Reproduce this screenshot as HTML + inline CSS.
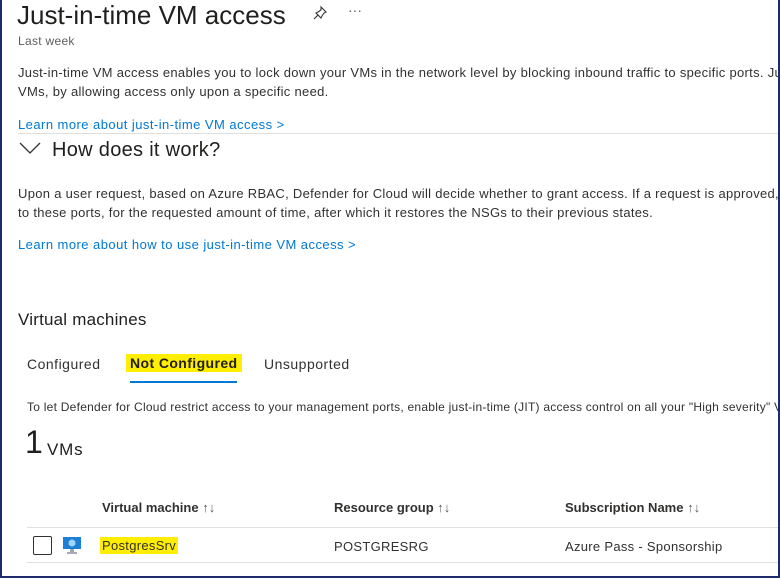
<!DOCTYPE html>
<html><head><style>
body{margin:0;width:780px;height:579px;overflow:hidden;background:#fff;font-family:"Liberation Sans",sans-serif;color:#323130;position:relative}
.c{position:absolute;left:0;top:0;width:778px;height:577px;overflow:hidden}
.f{position:absolute;left:0;top:0;width:776px;height:576px;border:2px solid #1f2a6b;border-top:none}
.a{position:absolute;white-space:nowrap}
.l{color:#0078d4;font-size:13px;letter-spacing:0.45px}
.t{font-size:13px;letter-spacing:0.3px}
.h{background:#ffee00}
.hr{position:absolute;height:1px;background:#e1dfdd}
</style></head><body>
<div class="c">
<div class="a" style="left:17px;top:0px;font-size:26px;color:#201f1e">Just-in-time VM access</div>
<div class="a" style="left:312px;top:5px"><svg width="16" height="16" viewBox="0 0 16 16" fill="none" stroke="#323130" stroke-width="1.1"><path d="M9 2l5 5-2 1-2 3-1 2-5-5 2-1 3-2z M6 10l-4 4"/></svg></div>
<div class="a" style="left:348px;top:2px;font-size:14px;color:#605e5c">···</div>
<div class="a" style="left:18px;top:34px;font-size:12px;color:#605e5c;letter-spacing:0.3px">Last week</div>
<div class="a t" style="left:18px;top:65px">Just-in-time VM access enables you to lock down your VMs in the network level by blocking inbound traffic to specific ports. Just-in-time</div>
<div class="a t" style="left:18px;top:84px">VMs, by allowing access only upon a specific need.</div>
<div class="a l" style="left:18px;top:117px">Learn more about just-in-time VM access &gt;</div>
<div class="hr" style="left:18px;top:133px;width:760px"></div>
<div class="a" style="left:18px;top:140px"><svg width="24" height="16" viewBox="0 0 24 16"><path d="M2 3l10 10 10-10" fill="none" stroke="#323130" stroke-width="1.3"/></svg></div>
<div class="a" style="left:52px;top:139px;font-size:20px;color:#201f1e;letter-spacing:0.3px">How does it work?</div>
<div class="a t" style="left:18px;top:186px">Upon a user request, based on Azure RBAC, Defender for Cloud will decide whether to grant access. If a request is approved, Defender for</div>
<div class="a t" style="left:18px;top:205px">to these ports, for the requested amount of time, after which it restores the NSGs to their previous states.</div>
<div class="a l" style="left:18px;top:237px">Learn more about how to use just-in-time VM access &gt;</div>
<div class="a" style="left:18px;top:310px;font-size:17px;color:#201f1e;letter-spacing:0.2px">Virtual machines</div>
<div class="a" style="left:27px;top:356px;font-size:14px;letter-spacing:0.5px">Configured</div>
<div class="a h" style="left:126px;top:354px;font-size:14px;font-weight:bold;padding:1px 5px 1px 4px;color:#201f1e;letter-spacing:0.4px">Not Configured</div>
<div class="a" style="left:130px;top:381px;width:107px;height:2px;background:#0078d4"></div>
<div class="a" style="left:264px;top:356px;font-size:14px;letter-spacing:0.5px">Unsupported</div>
<div class="a" style="left:27px;top:400px;font-size:12px;letter-spacing:0.25px">To let Defender for Cloud restrict access to your management ports, enable just-in-time (JIT) access control on all your "High severity" VM</div>
<div class="a" style="left:25px;top:424px;font-size:32px;color:#201f1e">1</div>
<div class="a" style="left:47px;top:440px;font-size:17px;color:#201f1e;letter-spacing:0.8px">VMs</div>
<div class="a" style="left:102px;top:500px;font-size:13px;font-weight:bold">Virtual machine <span style="font-weight:normal;color:#605e5c">↑↓</span></div>
<div class="a" style="left:334px;top:500px;font-size:13px;font-weight:bold">Resource group <span style="font-weight:normal;color:#605e5c">↑↓</span></div>
<div class="a" style="left:565px;top:500px;font-size:13px;font-weight:bold">Subscription Name <span style="font-weight:normal;color:#605e5c">↑↓</span></div>
<div class="hr" style="left:27px;top:527px;width:751px"></div>
<div class="a" style="left:33px;top:536px;width:17px;height:17px;border:1px solid #323130;border-radius:2px"></div>
<div class="a" style="left:62px;top:536px"><svg width="20" height="18" viewBox="0 0 20 18"><rect x="1" y="1" width="18" height="12" fill="#1e7fd6"/><circle cx="10" cy="7" r="3.5" fill="#9fd6f5"/><rect x="8" y="13" width="4" height="3" fill="#9aa"/><rect x="5" y="16" width="10" height="2" fill="#aab"/></svg></div>
<div class="a h" style="left:100px;top:537px;font-size:13px;padding:1px 2px;letter-spacing:0.3px">PostgresSrv</div>
<div class="a t" style="left:334px;top:539px">POSTGRESRG</div>
<div class="a t" style="left:565px;top:539px">Azure Pass - Sponsorship</div>
<div class="hr" style="left:27px;top:562px;width:751px"></div>
</div>
<div class="f"></div>
</body></html>
